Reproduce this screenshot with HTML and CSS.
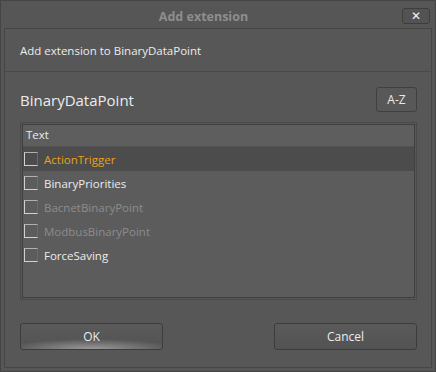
FILE: index.html
```html
<!DOCTYPE html>
<html>
<head>
<meta charset="utf-8">
<link rel="stylesheet" href="styles.css">
</head>
<body>
<div class="window">
  <div class="titlebar">
    <div class="title">Add extension</div>
    <button class="close">✕</button>
  </div>
  <div class="content">
    <div class="intro">Add extension to BinaryDataPoint</div>
    <div class="main">
      <div class="head">
        <div class="name">BinaryDataPoint</div>
        <button class="az">A-Z</button>
      </div>
      <div class="list">
        <div class="list-inner">
          <div class="colhead">Text</div>
          <div class="row selected"><span class="cb"></span><span class="label active">ActionTrigger</span></div>
          <div class="row"><span class="cb"></span><span class="label">BinaryPriorities</span></div>
          <div class="row"><span class="cb"></span><span class="label disabled">BacnetBinaryPoint</span></div>
          <div class="row"><span class="cb"></span><span class="label disabled">ModbusBinaryPoint</span></div>
          <div class="row"><span class="cb"></span><span class="label">ForceSaving</span></div>
        </div>
      </div>
      <div class="buttons">
        <button class="btn ok">OK</button>
        <button class="btn">Cancel</button>
      </div>
    </div>
  </div>
</div>
</body>
</html>
```
FILE: styles.css
```css
* { box-sizing: border-box; }
html, body { margin: 0; padding: 0; }
body {
  background: #575757;
  font-family: "Open Sans", "Noto Sans", sans-serif;
  font-size: 11.5px;
  color: #e6e6e6;
}
.window {
  width: 436px;
  height: 372px;
  background: #565656;
  border: 1px solid #454545;
  display: flex;
  flex-direction: column;
}
.titlebar {
  height: 27px;
  display: flex;
  align-items: center;
  padding: 0 5px 0 4px;
}
.title {
  flex: 1;
  text-align: center;
  font-weight: bold;
  font-size: 12.5px;
  color: #8e8e8e;
  padding-top: 3px;
}
.close {
  width: 28px;
  height: 16px;
  margin-top: 2px;
  background: #535353;
  border: 1px solid #3e3e3e;
  border-radius: 3px;
  color: #f4f4f4;
  font-size: 12px;
  font-weight: bold;
  line-height: 12px;
  padding: 0;
  font-family: "DejaVu Sans", sans-serif;
}
.content {
  flex: 1;
  margin: 0 3px 3px 3px;
  border: 1px solid #464646;
  background: #575757;
  display: flex;
  flex-direction: column;
}
.intro {
  height: 43px;
  padding: 14px 0 0 15px;
  border-bottom: 1px solid #4a4a4a;
  color: #ececec;
}
.main {
  padding: 0 14px 0 15px;
  flex: 1;
  display: flex;
  flex-direction: column;
}
.head {
  display: flex;
  align-items: center;
  justify-content: space-between;
  height: 50px;
  padding-top: 5px;
}
.name {
  font-size: 15px;
  color: #ececec;
}
.az {
  width: 41px;
  height: 25px;
  background: #585858;
  border: 1px solid #404040;
  border-radius: 3px;
  color: #e8e8e8;
  font-family: inherit;
  font-size: 12px;
  padding: 0;
}
.list {
  height: 178px;
  border: 1px solid #4a4a4a;
  padding: 1px;
  background: #575757;
}
.list-inner {
  height: 100%;
  border: 1px solid #3f3f3f;
  background: #5c5c5c;
}
.colhead {
  height: 22px;
  line-height: 20px;
  padding-left: 3px;
  background: #5e5e5e;
  color: #ececec;
  border-bottom: 1px solid #525252;
}
.row {
  height: 24px;
  display: flex;
  align-items: center;
  padding-left: 1px;
}
.row.selected {
  background: #4c4c4c;
}
.cb {
  width: 14px;
  height: 14px;
  border: 1px solid #d0d0d0;
  border-right-color: #6a6a6a;
  border-top-color: #b0b0b0;
  margin-right: 6px;
  flex: none;
}
.label { color: #ececec; }
.label.active { color: #e8a21a; }
.label.disabled { color: #8c8c8c; }
.buttons {
  display: flex;
  justify-content: space-between;
  margin-top: 23px;
}
.btn {
  width: 143px;
  height: 27px;
  background: linear-gradient(#5a5a5a, #535353);
  border: 1px solid #3c3c3c;
  border-radius: 3px;
  color: #ececec;
  font-family: inherit;
  font-size: 12px;
  padding: 0;
}
.btn.ok {
  background: radial-gradient(ellipse 60% 40% at 50% 100%, #9a9a9a, rgba(90,90,90,0) 100%), linear-gradient(#5a5a5a, #535353);
}
```
